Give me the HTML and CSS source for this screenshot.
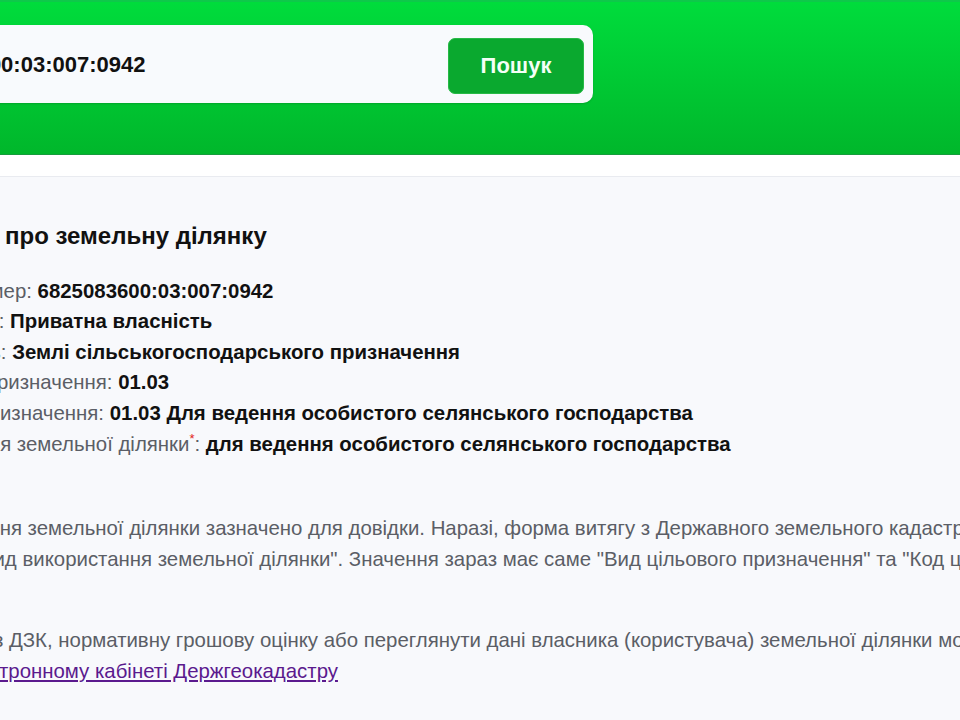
FILE: index.html
```html
<!DOCTYPE html>
<html lang="uk">
<head>
    <meta charset="UTF-8">
    <meta name="viewport" content="width=device-width, initial-scale=1.0">
    <title>Пошук земельної ділянки</title>
    <link rel="stylesheet" href="styles.css">
</head>
<body>
    <div class="page">
        <header class="header">
            <form class="search" id="searchForm">
                <input type="text" class="search-input" id="cadNum" value="6825083600:03:007:0942">
                <button type="submit" class="search-btn">Пошук</button>
            </form>
        </header>
        <div class="subbar"></div>

        <main class="content">
            <h2 class="title">Загальні дані про земельну ділянку</h2>
            <ul class="info">
                <li>Кадастровий номер: <b>6825083600:03:007:0942</b></li>
                <li>Форма власності: <b>Приватна власність</b></li>
                <li>Категорія земель: <b>Землі сільськогосподарського призначення</b></li>
                <li>Клас цільового призначення: <b>01.03</b></li>
                <li>Вид цільового призначення: <b>01.03 Для ведення особистого селянського господарства</b></li>
                <li>Вид використання земельної ділянки<sup class="star">*</sup>: <b>для ведення особистого селянського господарства</b></li>
            </ul>

            <p class="note"><sup class="star">*</sup> Вид використання земельної ділянки зазначено для довідки. Наразі, форма витягу з Державного земельного кадастру<br>не має графи "Вид використання земельної ділянки". Значення зараз має саме "Вид цільового призначення" та "Код цільового призначення".</p>

            <p class="note">Отримати витяг з ДЗК, нормативну грошову оцінку або переглянути дані власника (користувача) земельної ділянки можна в особистому <a href="#" class="cab-link">електронному кабінеті Держгеокадастру</a></p>
        </main>
    </div>
</body>
</html>
```

FILE: styles.css
```css
html, body {
    margin: 0;
    overflow: hidden;
}
body {
    font-family: "Liberation Sans", Arial, sans-serif;
    background-color: #f8f9fc;
    color: #111;
}
.page {
    margin-left: -161px;
    width: 1500px;
}

/* header with search */
.header {
    background: linear-gradient(#00dc3c, #00b72b);
    border-top: 2px solid #0ec94a;
    border-bottom: 1px solid #169c3c;
    padding: 23px 0 51px;
}
.search {
    display: flex;
    align-items: center;
    width: 754px;
    box-sizing: border-box;
    padding: 0 9px 0 52px;
    height: 78px;
    background-color: #f8fafd;
    border-radius: 10px;
    box-shadow: 0 1px 2px rgba(0, 0, 0, 0.15);
}
.search-input {
    flex: 1;
    border: none;
    background: transparent;
    font-family: inherit;
    font-size: 22px;
    font-weight: bold;
    color: #111;
    outline: none;
    padding: 0;
    margin-top: 2px;
}
.search-btn {
    width: 136px;
    height: 56px;
    border: 1px solid #27b946;
    border-radius: 7px;
    background-color: #0aa92f;
    color: #f4fff6;
    font-family: inherit;
    font-size: 22px;
    font-weight: bold;
    margin-top: 4px;
}
.subbar {
    height: 21px;
    background-color: #fff;
    border-bottom: 1px solid #e9ebf0;
}

/* main info */
.content {
    font-size: 20.4px;
    line-height: 30.6px;
    color: #5b5e66;
    width: 1265px;
}
.title {
    font-size: 24px;
    color: #111;
    margin: 44px 0 24px;
}
.info {
    list-style: none;
    margin: 0;
    padding: 0;
}
.info b {
    color: #111;
}
.star {
    color: #e21b1b;
    font-size: 13px;
    line-height: 0;
}
.note {
    margin: 54px 0 0;
}
.note + .note {
    margin-top: 20px;
}
.cab-link {
    color: #5b1a8e;
}
```
